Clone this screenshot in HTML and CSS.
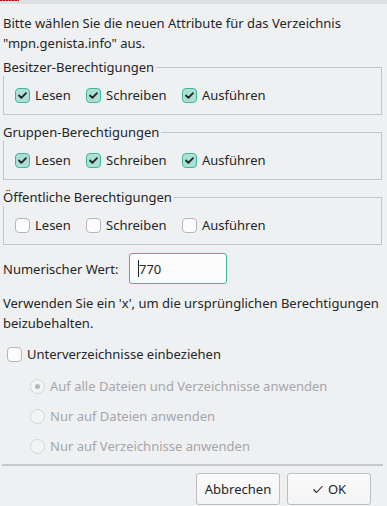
FILE: index.html
```html
<!DOCTYPE html>
<html lang="de">
<head>
<meta charset="utf-8">
<link rel="stylesheet" href="styles.css">
</head>
<body>
<div class="topbar"><div class="dash"></div></div>
<div class="content">
  <p class="intro">Bitte wählen Sie die neuen Attribute für das Verzeichnis<br>"mpn.genista.info" aus.</p>

  <fieldset class="group">
    <legend>Besitzer-Berechtigungen</legend>
    <div class="row">
      <label class="check"><span class="box on"><svg viewBox="0 0 15 15"><polyline points="3.5,7.5 6.2,10.2 11.5,4.8"/></svg></span>Lesen</label>
      <label class="check"><span class="box on"><svg viewBox="0 0 15 15"><polyline points="3.5,7.5 6.2,10.2 11.5,4.8"/></svg></span>Schreiben</label>
      <label class="check"><span class="box on"><svg viewBox="0 0 15 15"><polyline points="3.5,7.5 6.2,10.2 11.5,4.8"/></svg></span>Ausführen</label>
    </div>
  </fieldset>

  <fieldset class="group">
    <legend>Gruppen-Berechtigungen</legend>
    <div class="row">
      <label class="check"><span class="box on"><svg viewBox="0 0 15 15"><polyline points="3.5,7.5 6.2,10.2 11.5,4.8"/></svg></span>Lesen</label>
      <label class="check"><span class="box on"><svg viewBox="0 0 15 15"><polyline points="3.5,7.5 6.2,10.2 11.5,4.8"/></svg></span>Schreiben</label>
      <label class="check"><span class="box on"><svg viewBox="0 0 15 15"><polyline points="3.5,7.5 6.2,10.2 11.5,4.8"/></svg></span>Ausführen</label>
    </div>
  </fieldset>

  <fieldset class="group">
    <legend>Öffentliche Berechtigungen</legend>
    <div class="row">
      <label class="check"><span class="box"></span>Lesen</label>
      <label class="check"><span class="box"></span>Schreiben</label>
      <label class="check"><span class="box"></span>Ausführen</label>
    </div>
  </fieldset>

  <div class="numeric">
    <span>Numerischer Wert:</span>
    <div class="input"><span class="caret"></span>770</div>
  </div>

  <p class="hint">Verwenden Sie ein 'x', um die ursprünglichen Berechtigungen<br>beizubehalten.</p>

  <label class="check sub"><span class="box"></span>Unterverzeichnisse einbeziehen</label>

  <div class="radios">
    <div class="radio"><span class="circle sel"></span>Auf alle Dateien und Verzeichnisse anwenden</div>
    <div class="radio"><span class="circle"></span>Nur auf Dateien anwenden</div>
    <div class="radio"><span class="circle"></span>Nur auf Verzeichnisse anwenden</div>
  </div>
</div>
<div class="separator"></div>
<div class="buttons">
  <button class="btn">Abbrechen</button>
  <button class="btn"><svg class="okicon" viewBox="0 0 12 12"><polyline points="1.5,6.5 4.5,9.5 10.5,3"/></svg>OK</button>
</div>
</body>
</html>
```
FILE: styles.css
```css
html, body {
  margin: 0;
  padding: 0;
}
body {
  background: #eff0f1;
  color: #232629;
  font-family: "Noto Sans", "DejaVu Sans", sans-serif;
  font-size: 13px;
  width: 387px;
  height: 506px;
  overflow: hidden;
}
.topbar {
  height: 4px;
  background: #dedfe0;
}
.dash {
  width: 19px;
  height: 1px;
  background: repeating-linear-gradient(90deg, #a11 0 2px, #d66 2px 3px);
}
.content {
  padding: 0 5px 0 3px;
}
.intro {
  margin: 9px 0 0 0;
  line-height: 20px;
}
.group {
  margin: 8px 0 0 0;
  padding: 0;
  border: 1px solid #c3c5c7;
  min-width: 0;
}
.intro + .group {
  margin-top: 5px;
}
.group legend {
  padding: 0 2px 0 0;
  margin-left: -1px;
  line-height: 18px;
}
.row {
  display: flex;
  padding: 10px 0 10px 11px;
}
.check {
  display: flex;
  align-items: center;
  line-height: 18px;
}
.row .check:nth-child(1) { width: 71px; }
.row .check:nth-child(2) { width: 96px; }
.box {
  box-sizing: border-box;
  width: 15px;
  height: 15px;
  border: 1px solid #b4b6b8;
  border-radius: 4px;
  background: #fcfcfc;
  margin-right: 5px;
  display: flex;
}
.box.on {
  background: #ade0d4;
  border-color: #3db99a;
}
.box svg {
  width: 13px;
  height: 13px;
}
.box polyline {
  fill: none;
  stroke: #232629;
  stroke-width: 2.2;
  stroke-linecap: round;
  stroke-linejoin: round;
}
.numeric {
  display: flex;
  align-items: center;
  margin-top: 8px;
}
.numeric > span {
  width: 126px;
}
.input {
  box-sizing: border-box;
  width: 98px;
  height: 31px;
  border: 1px solid #3db99a;
  border-radius: 3px;
  background: #fcfcfc;
  display: flex;
  align-items: center;
  padding-left: 8px;
}
.caret {
  width: 1px;
  height: 17px;
  background: #232629;
}
.hint {
  margin: 9px 0 0 0;
  line-height: 20px;
}
.sub {
  margin: 12px 0 0 4px;
}
.radios {
  margin: 8px 0 0 27px;
  color: #a5a7a9;
}
.radio {
  display: flex;
  align-items: center;
  height: 30px;
}
.circle {
  box-sizing: border-box;
  width: 15px;
  height: 15px;
  border: 1px solid #d3d5d6;
  border-radius: 50%;
  background: #f3f4f4;
  margin-right: 5px;
  display: flex;
  align-items: center;
  justify-content: center;
}
.circle.sel::after {
  content: "";
  width: 5px;
  height: 5px;
  border-radius: 50%;
  background: #b5b7b9;
}
.separator {
  margin: 3px 4px 0 2px;
  height: 2px;
  background: #c6c8c9;
}
.buttons {
  display: flex;
  justify-content: flex-end;
  gap: 7px;
  padding: 7px 16px 0 0;
}
.btn {
  box-sizing: border-box;
  height: 32px;
  width: 84px;
  border: 1px solid #bcbec0;
  border-radius: 3px;
  background: linear-gradient(#fbfbfb, #f4f4f5);
  font-family: inherit;
  font-size: 13px;
  color: #232629;
  display: flex;
  align-items: center;
  justify-content: center;
  padding: 0;
}
.okicon {
  width: 12px;
  height: 12px;
  margin-right: 4px;
}
.okicon polyline {
  fill: none;
  stroke: #232629;
  stroke-width: 1.1;
}
```
